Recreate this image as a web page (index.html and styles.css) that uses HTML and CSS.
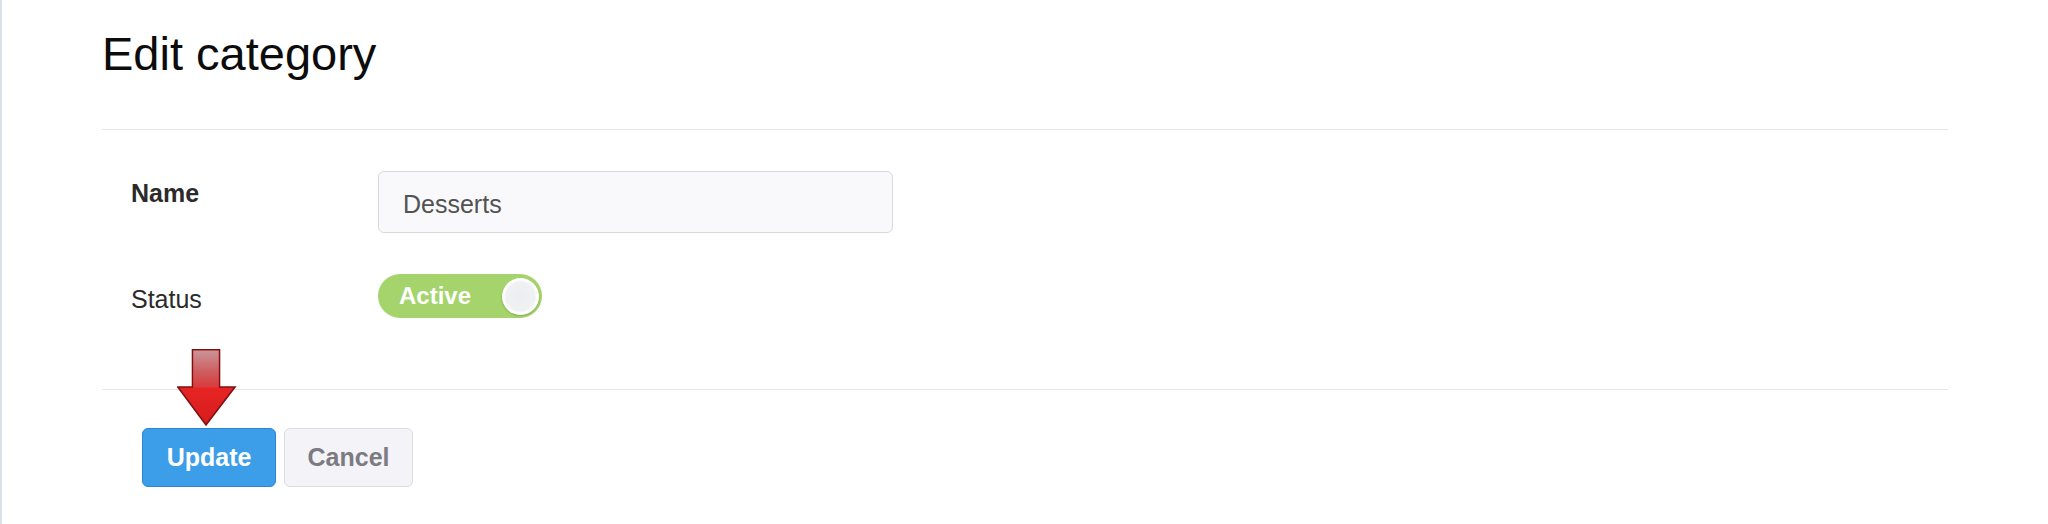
FILE: index.html
```html
<!DOCTYPE html>
<html lang="en">
<head>
<meta charset="utf-8">
<title>Edit category</title>
<link rel="stylesheet" href="styles.css">
</head>
<body>
<div class="page">
  <h1 class="title">Edit category</h1>
  <div class="divider divider-top"></div>
  <form class="form">
    <div class="row">
      <label class="label label-name" for="name">Name</label>
      <input class="input" id="name" type="text" value="Desserts">
    </div>
    <div class="row row-status">
      <span class="label label-status">Status</span>
      <div class="toggle">
        <span class="toggle-text">Active</span>
        <span class="knob"></span>
      </div>
    </div>
  </form>
  <div class="divider divider-bottom"></div>
  <div class="actions">
    <button class="btn btn-primary" type="button">Update</button>
    <button class="btn btn-default" type="button">Cancel</button>
  </div>
  <svg class="pointer-arrow" width="60" height="78" viewBox="0 0 60 78">
    <defs>
      <linearGradient id="shaftGrad" x1="0" y1="0" x2="0" y2="1">
        <stop offset="0" stop-color="#c99498"/>
        <stop offset="0.6" stop-color="#cf5a5e"/>
        <stop offset="1" stop-color="#d93a3a"/>
      </linearGradient>
      <linearGradient id="headGrad" x1="0" y1="0" x2="0" y2="1">
        <stop offset="0" stop-color="#d9393b"/>
        <stop offset="0.5" stop-color="#e82424"/>
        <stop offset="1" stop-color="#d61c1c"/>
      </linearGradient>
    </defs>
    <path d="M15.5 0.8 H42.5 V38 H58 L29 76 L0.8 38 H15.5 Z" fill="url(#headGrad)" stroke="#7e1010" stroke-width="1.6" stroke-linejoin="miter"/>
    <rect x="16.3" y="1.6" width="25.4" height="37" fill="url(#shaftGrad)"/>
  </svg>
</div>
</body>
</html>
```

FILE: styles.css
```css
html, body {
  margin: 0;
  padding: 0;
  background: #ffffff;
}

body {
  font-family: "Liberation Sans", Arial, Helvetica, sans-serif;
  color: #333333;
}

.page {
  position: relative;
  box-sizing: border-box;
  min-height: 524px;
  border-left: 2px solid #d8e2e9;
  padding: 0 100px 0 100px;
}

.title {
  margin: 0;
  padding-top: 26px;
  font-size: 47px;
  line-height: 56px;
  font-weight: 400;
  color: #0c0c0c;
}

.divider {
  height: 0;
  border-top: 1px solid #e7e7e7;
}

.divider-top {
  margin-top: 47px;
}

.form {
  margin: 0;
  padding: 41px 0 0 29px;
}

.row {
  display: flex;
  align-items: flex-start;
}

.row-status {
  margin-top: 41px;
}

.label {
  width: 247px;
  flex: none;
  font-size: 25px;
  line-height: 30px;
  color: #2b2b2b;
}

.label-name {
  font-weight: 700;
  padding-top: 7px;
}

.label-status {
  padding-top: 10px;
}

.input {
  box-sizing: border-box;
  width: 515px;
  height: 62px;
  margin: 0;
  padding: 4px 24px 0 24px;
  border: 1px solid #d5d9de;
  border-radius: 6px;
  background: #f9f9fb;
  font-family: "Liberation Sans", Arial, Helvetica, sans-serif;
  font-size: 25px;
  color: #525252;
  outline: none;
}

.toggle {
  box-sizing: border-box;
  width: 164px;
  height: 44px;
  border-radius: 22px;
  background: #a4d46b;
  display: flex;
  align-items: center;
  padding: 0 3px 0 21px;
}

.toggle-text {
  font-size: 24px;
  line-height: 30px;
  font-weight: 700;
  color: #ffffff;
}

.knob {
  margin-left: auto;
  width: 37px;
  height: 37px;
  border-radius: 50%;
  background: radial-gradient(circle, #eceef1 0, #f0f1f3 55%, #ffffff 64%);
  box-shadow: 0 1px 2px rgba(60, 90, 30, 0.35);
}

.divider-bottom {
  margin-top: 71px;
}

.actions {
  display: flex;
  gap: 8px;
  padding: 38px 0 0 40px;
}

.btn {
  box-sizing: border-box;
  height: 59px;
  margin: 0;
  padding: 0 0 1px 0;
  border-radius: 6px;
  font-family: "Liberation Sans", Arial, Helvetica, sans-serif;
  font-size: 25px;
  font-weight: 700;
  line-height: 30px;
  cursor: pointer;
}

.btn-primary {
  width: 134px;
  background: #3c9de9;
  border: 1px solid #2a87d3;
  color: #ffffff;
}

.btn-default {
  width: 129px;
  background: #f3f3f8;
  border: 1px solid #dcdce3;
  color: #7b7b81;
}

.pointer-arrow {
  position: absolute;
  left: 175px;
  top: 349px;
}
```
